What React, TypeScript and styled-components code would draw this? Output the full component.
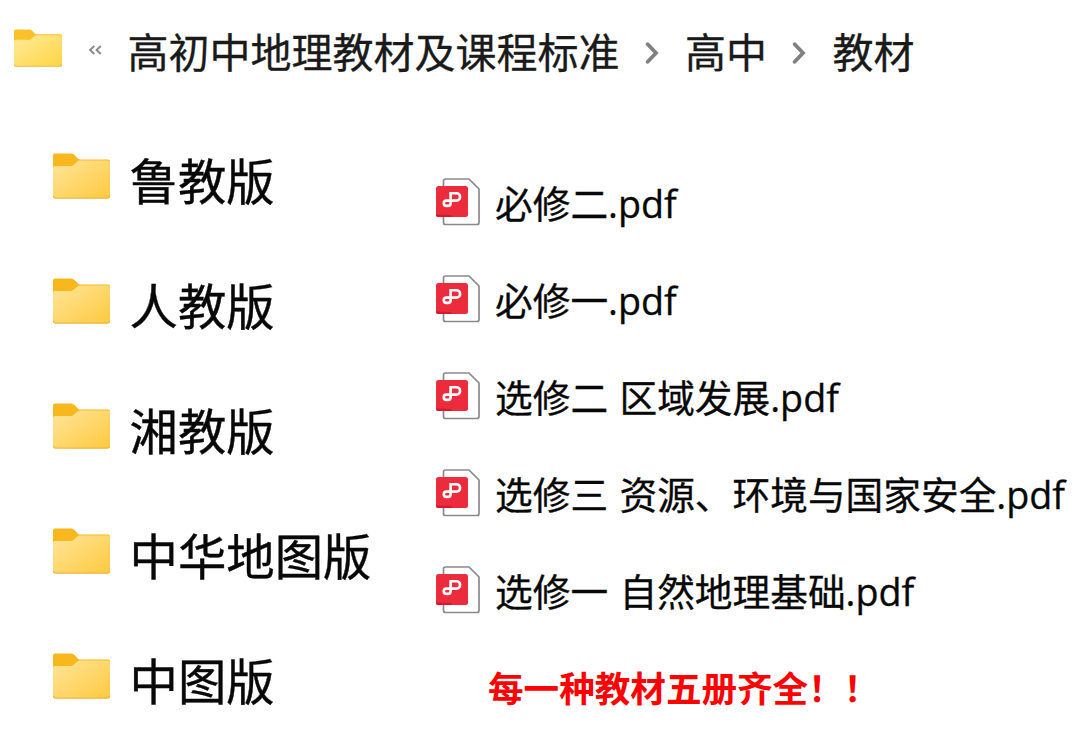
import { Fragment } from "react";
import styled, { createGlobalStyle } from "styled-components";

const crumbs = ["高初中地理教材及课程标准", "高中", "教材"];

const folders = ["鲁教版", "人教版", "湘教版", "中华地图版", "中图版"];

const files = [
  "必修二.pdf",
  "必修一.pdf",
  "选修二 区域发展.pdf",
  "选修三 资源、环境与国家安全.pdf",
  "选修一 自然地理基础.pdf",
];

const FolderIcon = ({ id, small }: { id: string; small?: boolean }) => (
  <FolderSvg viewBox="0 0 57 46" $small={small} preserveAspectRatio="none">
    <defs>
      <linearGradient id={id} x1="0" y1="0" x2="1" y2="1">
        <stop offset="0" stopColor={small ? "#ffea99" : "#ffe59a"} />
        <stop offset="1" stopColor={small ? "#ffd545" : "#fec93e"} />
      </linearGradient>
    </defs>
    <path
      d="M0 2.500Q0 .5 2 .5H18Q20 .5 21.500 2L25 5.800Q25.700 6.400 27 6.400H55Q57 6.400 57 8.400V20H0Z"
      fill={small ? "#fcc02a" : "#f8b71d"}
    />
    <path
      d="M0 15Q0 13 2 13H17Q19.500 13 21 11.500L24 8.700Q25.300 7.600 27 7.600H55Q57 7.600 57 9.600V43.500Q57 45.500 55 45.500H2Q0 45.500 0 43.500Z"
      fill={`url(#${id})`}
    />
    <path
      d="M.5 43Q.5 45.100 2.300 45.100H54.700Q56.500 45.100 56.500 43"
      fill="none"
      stroke="#e9b13c"
      strokeWidth="1"
    />
  </FolderSvg>
);

const PdfIcon = () => (
  <PdfSvg viewBox="0 0 44 48">
    <path
      d="M9.500 1H33L43 11V44.500Q43 46.500 41 46.500H9.500Q7.500 46.500 7.500 44.500V3Q7.500 1 9.500 1Z"
      fill="#fff"
      stroke="#8a8a8a"
      strokeWidth="1.700"
      strokeLinejoin="round"
    />
    <rect x="0" y="8" width="32" height="31" rx="2.500" fill="#ec2c3d" />
    <path d="M0 36.500Q0 39 2.500 39H15.500V37Z" fill="#d3192c" />
    <path
      d="M14.600 25.500V15.200H20.400A3.700 3.700 0 0 1 20.400 22.600H10.400A2.600 2.600 0 0 0 10.400 27.900H12A2.600 2.600 0 0 0 14.600 25.300"
      fill="none"
      stroke="#fff"
      strokeWidth="2.600"
    />
  </PdfSvg>
);

const App = () => {
  return (
    <>
      <GlobalStyle />
      <Explorer>
        <AddressBar>
          <FolderIcon id="crumb-folder" small />
          <Collapsed viewBox="0 0 14 10">
            <path d="M6.300 1L2 5L6.300 9M12.800 1L8.500 5L12.800 9" />
          </Collapsed>
          {crumbs.map((crumb, i) => (
            <Fragment key={crumb}>
              {i > 0 && (
                <Chevron viewBox="0 0 13 22">
                  <path d="M2.200 2.200L10.500 11L2.200 19.800" />
                </Chevron>
              )}
              <Crumb>{crumb}</Crumb>
            </Fragment>
          ))}
        </AddressBar>
        <Columns>
          <FolderList>
            {folders.map((name, i) => (
              <FolderRow key={name}>
                <FolderIcon id={`folder-${i}`} />
                <FolderName>{name}</FolderName>
              </FolderRow>
            ))}
          </FolderList>
          <FileList>
            {files.map((name) => (
              <FileRow key={name}>
                <PdfIcon />
                <FileName>{name}</FileName>
              </FileRow>
            ))}
            <Notice>每一种教材五册齐全！！</Notice>
          </FileList>
        </Columns>
      </Explorer>
    </>
  );
};

const GlobalStyle = createGlobalStyle`
  body {
    margin: 0;
    background: #fff;
    color: #080808;
    font-family: "Open Sans", "Noto Sans CJK SC", sans-serif;
  }
`;

const Explorer = styled.main`
  width: 1080px;
  height: 751px;
  overflow: hidden;
`;

const AddressBar = styled.nav`
  display: flex;
  align-items: center;
  height: 106px;
  padding-left: 14px;
  box-sizing: border-box;
`;

const Crumb = styled.span`
  padding-bottom: 2px;
  font-size: 41px;
  line-height: 60px;
  color: #1a1a1a;
  white-space: nowrap;
  -webkit-text-stroke: 0.3px;
`;

const Collapsed = styled.svg`
  width: 14px;
  height: 10px;
  margin: 0 25.5px 6px 26px;
  fill: none;
  stroke: #858585;
  stroke-width: 1.8;
`;

const Chevron = styled.svg`
  width: 14px;
  height: 22px;
  margin: 0 26.5px 0 25px;
  fill: none;
  stroke: #808080;
  stroke-width: 3.8;
  stroke-linecap: round;
`;

const FolderSvg = styled.svg<{ $small?: boolean }>`
  flex: none;
  width: ${({ $small }) => ($small ? "48px" : "57px")};
  height: ${({ $small }) => ($small ? "38px" : "46px")};
  margin-bottom: ${({ $small }) => ($small ? "10px" : "12px")};
`;

const Columns = styled.div`
  display: flex;
`;

const FolderList = styled.div`
  width: 383px;
  padding: 13px 0 0 53px;
`;

const FolderRow = styled.div`
  display: flex;
  align-items: center;
  gap: 19.5px;
  height: 125.2px;
`;

const FolderName = styled.span`
  padding-bottom: 2px;
  font-size: 48.4px;
  line-height: 70px;
  white-space: nowrap;
  -webkit-text-stroke: 0.4px;
`;

const FileList = styled.div`
  padding-top: 47px;
`;

const FileRow = styled.div`
  display: flex;
  align-items: center;
  gap: 15px;
  height: 97.2px;
`;

const PdfSvg = styled.svg`
  flex: none;
  width: 44px;
  height: 48px;
`;

const FileName = styled.span`
  padding-top: 4px;
  font-size: 37.7px;
  line-height: 54px;
  word-spacing: 1.6px;
  white-space: nowrap;
  -webkit-text-stroke: 0.3px;
`;

const Notice = styled.p`
  margin: 23px 0 0 52px;
  color: #fe0000;
  font-size: 35.6px;
  font-weight: 700;
  line-height: 52px;
`;

export default App;
